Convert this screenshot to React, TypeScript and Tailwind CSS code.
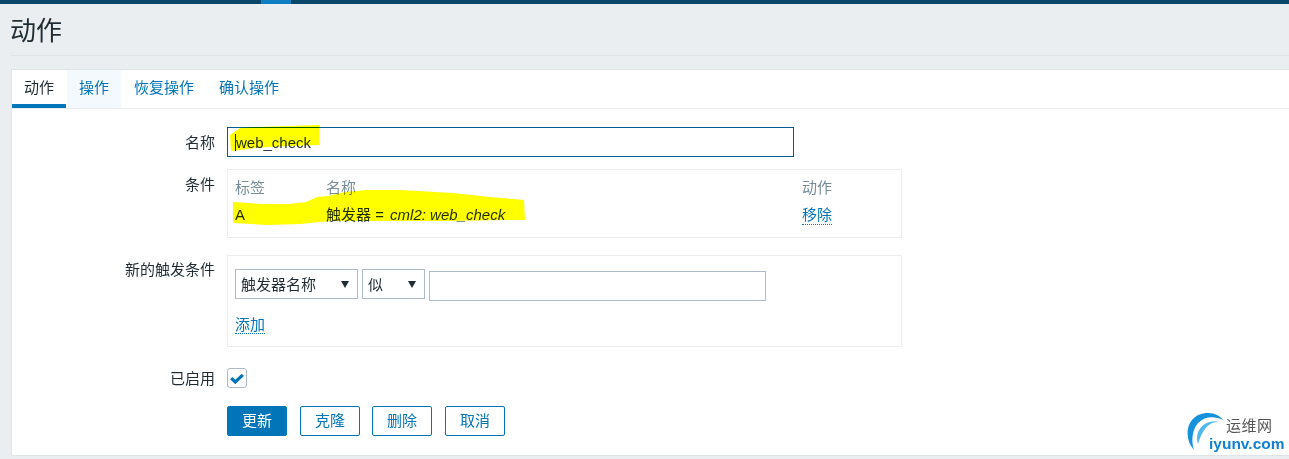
const font = { fontFamily: '"Liberation Sans","Noto Sans CJK SC",sans-serif' };

function Tab({ children, active, hover }: { children: string; active?: boolean; hover?: boolean }) {
  return (
    <div className={`h-[38px] flex items-center justify-center px-[12px] ${active ? "border-b-[4px] border-[#0275b8] text-[#1f2c33] pt-[2px]" : "text-[#0275b8] pb-[2px]"} ${hover ? "bg-[#f4f9fd]" : ""}`}>
      {children}
    </div>
  );
}

function Row({ label, className, labelClass, children }: { label: string; className?: string; labelClass?: string; children: React.ReactNode }) {
  return (
    <div className={`flex ${className ?? ""}`}>
      <div className={`w-[203px] shrink-0 text-right text-[#1f2c33] ${labelClass ?? ""}`}>{label}</div>
      <div className="ml-[12px] flex-1">{children}</div>
    </div>
  );
}

function Select({ value, width }: { value: string; width: string }) {
  return (
    <div className={`${width} h-[30px] border border-[#acbbc7] flex items-center justify-between pl-[5px] pr-[8px] text-[#1f2c33]`}>
      <span className="pt-[2px]">{value}</span>
      <span className="w-0 h-0 border-l-[4px] border-r-[4px] border-t-[7px] border-l-transparent border-r-transparent border-t-[#1f2c33]" />
    </div>
  );
}

function Btn({ children, primary }: { children: string; primary?: boolean }) {
  return (
    <div className={`w-[60px] h-[30px] rounded-[2px] border flex items-center justify-center ${primary ? "bg-[#0275b8] border-[#0275b8] text-white" : "border-[#0275b8] text-[#0275b8] bg-white"}`}>
      {children}
    </div>
  );
}

export default function App() {
  return (
    <div style={font} className="relative w-[1289px] h-[459px] overflow-hidden bg-[#ebeef0] text-[15px] leading-[20px]">
      <div className="h-[4px] bg-[#0a466a] pl-[261px]">
        <div className="w-[30px] h-[4px] bg-[#0e7dc2]" />
      </div>
      <div className="ml-[11px] h-[52px] border-b border-[#dfe4e7] text-[26px] leading-[54px] text-[#1f2c33]">
        <span className="-ml-[1px]">动作</span>
      </div>
      <div className="mt-[13px] ml-[11px] h-[387px] border border-r-0 border-[#dfe4e7] bg-white">
        <div className="flex gap-[1px] h-[38px] border-b border-[#ebeef0] box-content">
          <Tab active>动作</Tab>
          <Tab hover>操作</Tab>
          <Tab>恢复操作</Tab>
          <Tab>确认操作</Tab>
        </div>
        <div className="pt-[18px]">
          <Row label="名称" className="h-[30px] items-center" labelClass="pt-[1px]">
            <div className="w-[567px] h-[30px] border border-[#025c94] flex items-center pl-[7px] text-[#1f2c33]">
              <span className="w-[1px] h-[17px] bg-[#1f2c33]" />
              <span className="pt-[2px]">web_check</span>
            </div>
          </Row>
          <Row label="条件" className="mt-[12px]" labelClass="pt-[6px]">
            <div className="w-[675px] h-[69px] border border-[#ebeef0] pt-[8px] pl-[7px]">
              <div className="flex text-[#768d99]">
                <div className="w-[91px]">标签</div>
                <div className="w-[476px]">名称</div>
                <div>动作</div>
              </div>
              <div className="flex mt-[7px] text-[#1f2c33]">
                <div className="w-[91px]">A</div>
                <div className="w-[476px]">触发器 = <i className="ml-[2px]">cml2: web_check</i></div>
                <div className="text-[#0275b8] h-[20px] border-b border-dotted border-[#0275b8]">移除</div>
              </div>
            </div>
          </Row>
          <Row label="新的触发条件" className="mt-[17px]" labelClass="pt-[5px]">
            <div className="w-[675px] h-[92px] border border-[#ebeef0] pt-[13px] pl-[7px]">
              <div className="flex items-start gap-[4px]">
                <Select value="触发器名称" width="w-[123px]" />
                <Select value="似" width="w-[63px]" />
                <div className="w-[337px] h-[30px] mt-[2px] border border-[#acbbc7]" />
              </div>
              <div className="mt-[14px] w-fit h-[19px] text-[#0275b8] border-b border-dotted border-[#0275b8]">添加</div>
            </div>
          </Row>
          <Row label="已启用" className="mt-[21px] h-[20px] items-center" labelClass="pt-[1px]">
            <div className="w-[20px] h-[20px] rounded-[3px] border border-[#acbbc7] flex items-center justify-center">
              <svg width="14" height="11" viewBox="0 0 14 11">
                <path d="M1.2 5.2 L5.3 9 L12.8 1.8" fill="none" stroke="#0275b8" strokeWidth="3.2" />
              </svg>
            </div>
          </Row>
          <div className="flex mt-[18px] ml-[215px]">
            <Btn primary>更新</Btn>
            <div className="w-[13px]" />
            <Btn>克隆</Btn>
            <div className="w-[12px]" />
            <Btn>删除</Btn>
            <div className="w-[13px]" />
            <Btn>取消</Btn>
          </div>
        </div>
      </div>

      {/* marker scribbles drawn over the screenshot */}
      <svg className="absolute left-0 top-0 mix-blend-multiply pointer-events-none" width="1289" height="459">
        <path d="M230 135 L240 128 L255 127 L290 126 L319 125 L319 145 L290 146 L270 147 L255 148 L240 150 L231 151 Z" fill="#ffff00" />
        <path d="M233 202 L262 204 L290 204 L306 202 L317 197 L328 196 L345 192 L367 190 L400 190 L453 193 L490 197 L524 200 L525 220 L503 220 L450 221 L330 221 L300 224 L267 225 L233 223 Z" fill="#ffff00" />
      </svg>

      {/* watermark */}
      <div className="absolute left-[1185px] top-[411px] w-[104px] h-[45px]">
        <svg className="absolute left-0 top-0" width="40" height="42" viewBox="0 0 40 42">
          <path d="M9 39 C-3 26 2 2 23 2 C30 2 35 5 38 9 C30 5 20 5 13 12 C7 19 6 30 9 39 Z" fill="#1592dc" />
          <path d="M13 33 C9 20 19 8 34 11 C24 10 17 19 13 33 Z" fill="#4fb8ec" />
        </svg>
        <div className="absolute left-[41px] top-[6px] text-[15px] leading-[18px] tracking-[0.5px] text-[#555]">运维网</div>
        <div className="absolute left-[24px] top-[23px] text-[15.5px] leading-[20px] font-bold text-[#1281d0]">iyunv.com</div>
      </div>
    </div>
  );
}
